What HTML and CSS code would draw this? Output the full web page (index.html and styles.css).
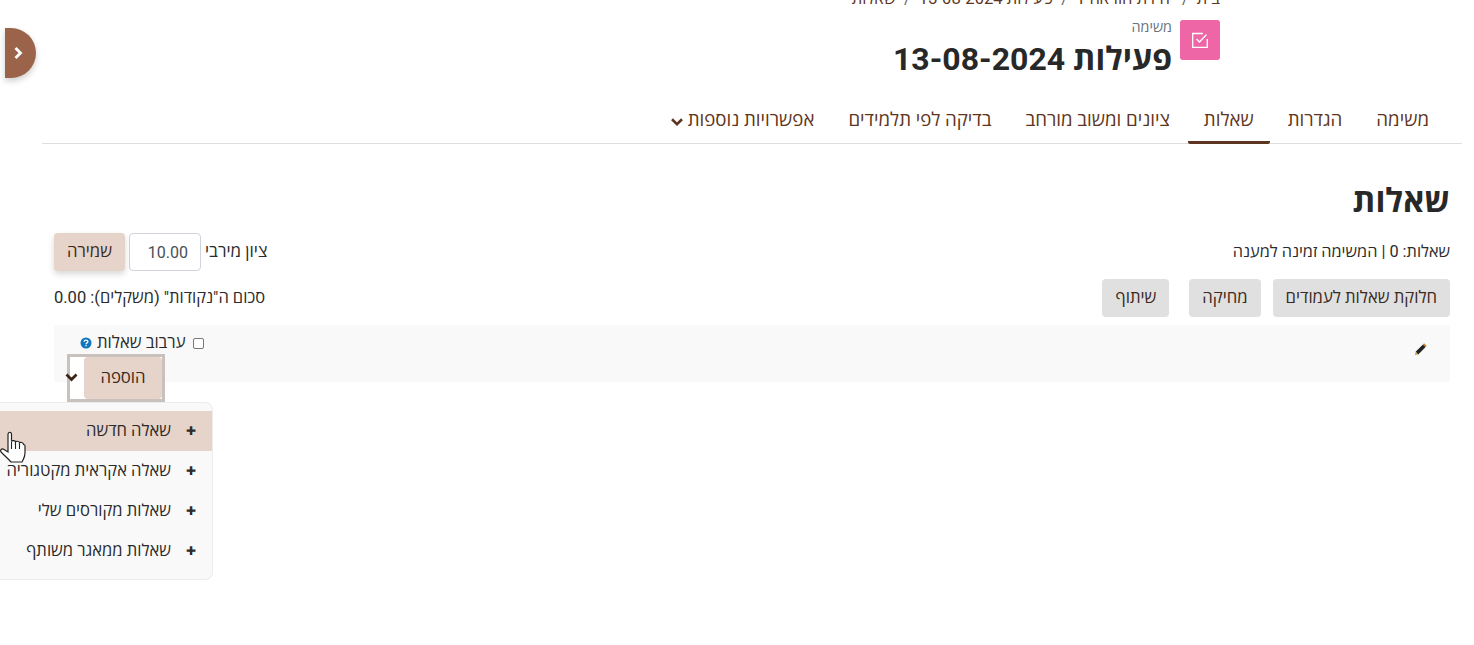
FILE: index.html
```html
<!DOCTYPE html>
<html lang="he" dir="rtl">
<head>
    <meta charset="UTF-8">
    <meta name="viewport" content="width=device-width, initial-scale=1.0">
    <title>פעילות 13-08-2024: שאלות</title>
    <link rel="stylesheet" href="styles.css">
</head>
<body>
    <a class="drawer-toggle" href="#">
        <svg width="10" height="14" viewBox="0 0 10 14"><path d="M2.5 2l5 5-5 5" fill="none" stroke="#fff" stroke-width="2.8"/></svg>
    </a>

    <div class="page">
        <ol class="breadcrumb">
            <li>בית</li>
            <li class="sep">/</li>
            <li>יחידת הוראה 1</li>
            <li class="sep">/</li>
            <li>פעילות 13-08-2024</li>
            <li class="sep">/</li>
            <li>שאלות</li>
        </ol>

        <div class="page-header">
            <div class="activity-icon">
                <svg width="16" height="16" viewBox="0 0 16 16" fill="none" stroke="#fff" stroke-width="1.3">
                    <path d="M11 1.5H.7v13.800h14.600V7"/>
                    <path d="M4.5 7l3 3L14.500 2.500"/>
                </svg>
            </div>
            <div class="header-text">
                <div class="activity-type">משימה</div>
                <h1>פעילות 13-08-2024</h1>
            </div>
        </div>

        <ul class="tabs">
            <li>משימה</li>
            <li>הגדרות</li>
            <li class="active">שאלות</li>
            <li>ציונים ומשוב מורחב</li>
            <li>בדיקה לפי תלמידים</li>
            <li>אפשרויות נוספות
                <svg width="12" height="8" viewBox="0 0 12 8"><path d="M1 1.300l5 4.900 5-4.900" fill="none" stroke="#5e3521" stroke-width="2.600"/></svg>
            </li>
        </ul>

        <div class="content">
            <h2>שאלות</h2>

            <div class="row info-row">
                <div>שאלות: 0 | המשימה זמינה למענה</div>
                <div class="maxgrade">
                    <label for="maxgrade">ציון מירבי</label>
                    <input type="text" id="maxgrade" value="10.00">
                    <button class="btn-primary" type="button">שמירה</button>
                </div>
            </div>

            <div class="row actions-row">
                <div class="actions">
                    <button class="btn-grey" type="button">חלוקת שאלות לעמודים</button>
                    <button class="btn-grey" type="button">מחיקה</button>
                    <button class="btn-grey btn-share" type="button">שיתוף</button>
                </div>
                <div class="sum">סכום ה"נקודות" (משקלים): 0.00</div>
            </div>

            <div class="section-bar">
                <svg class="pencil" width="13" height="13" viewBox="0 0 12 12">
                    <path d="M8.3 1.300l2.400 2.400-6.800 6.800-2.400-2.400z" fill="#222"/>
                    <path d="M8.3 1.300l1-1 2.400 2.400-1 1z" fill="#c77b20"/>
                    <path d="M1.500 8.100l2.400 2.400-3.200.8z" fill="#d9a441"/>
                </svg>
                <div class="section-tools">
                    <div class="shuffle">
                        <input type="checkbox" id="shuffle">
                        <label for="shuffle">ערבוב שאלות</label>
                        <svg width="12" height="12" viewBox="0 0 12 12">
                            <circle cx="6" cy="6" r="5.5" fill="#0f77bd"/>
                            <path d="M4.200 4.700c0-1 .8-1.600 1.800-1.600s1.900.6 1.900 1.500c0 1.300-1.800 1.300-1.800 2.600" fill="none" stroke="#fff" stroke-width="1.3"/>
                            <rect x="5.4" y="8" width="1.3" height="1.3" fill="#fff"/>
                        </svg>
                    </div>
                    <div class="add-menu">
                        <button class="btn-add" type="button">הוספה</button>
                        <svg width="13" height="9" viewBox="0 0 13 9"><path d="M1.500 1.500l5 5 5-5" fill="none" stroke="#3b2212" stroke-width="2.700"/></svg>
                    </div>
                </div>
            </div>
        </div>
    </div>

    <ul class="dropdown">
        <li class="hover"><span class="plus">✚</span>שאלה חדשה</li>
        <li><span class="plus">✚</span>שאלה אקראית מקטגוריה</li>
        <li><span class="plus">✚</span>שאלות מקורסים שלי</li>
        <li><span class="plus">✚</span>שאלות ממאגר משותף</li>
    </ul>

    <svg class="cursor" width="26" height="34" viewBox="0 0 26 34">
        <path d="M8 4.500c0-3 3.500-3 3.500 0v7c.7-1.400 4-1.200 4 .5.7-1.200 4-1 4 .8.8-1 4-.4 4 1.700 1 0 1.500.5 1.500 1.500v7c0 4-1.600 6-3 9H11C8.500 29 5 26 1.500 22.500c-2-2 0-4.500 2.500-3L8 22z" fill="#fff" stroke="#222" stroke-width="1.200"/>
        <path d="M11.500 12v7M15.500 12.500V19M19.500 13.500V19" fill="none" stroke="#222" stroke-width="1.100"/>
    </svg>
</body>
</html>
```

FILE: styles.css
```css
html, body {
    height: 100%;
    overflow: hidden;
}
body {
    margin: 0;
    background-color: white;
    font-family: Roboto, "Open Sans", sans-serif;
    font-size: 16.3px;
    line-height: 1.5;
    color: #2b2b2b;
}
ul, ol {
    list-style: none;
    margin: 0;
    padding: 0;
}
.page {
    margin: -13px 12px 0 42px;
}
.breadcrumb {
    display: flex;
    gap: 8px;
    height: 22px;
    padding-right: 242px;
    font-size: 16.6px;
    color: #5e3521;
}
.breadcrumb .sep {
    color: #6a6a6a;
}
.page-header {
    display: flex;
    gap: 8px;
    padding: 11px 242px 0 0;
    height: 69px;
}
.activity-icon {
    width: 40px;
    height: 40px;
    border-radius: 3px;
    background-color: #ee66a6;
    display: flex;
    justify-content: center;
    align-items: center;
}
.activity-type {
    font-size: 14.4px;
    line-height: 16px;
    color: #6a737b;
}
h1 {
    margin: 3px 0 0;
    font-size: 32px;
    line-height: 40px;
    font-weight: 700;
    color: #282828;
}
.tabs {
    display: flex;
    gap: 2px;
    margin-top: 9px;
    padding-right: 17px;
    height: 45px;
    border-bottom: 1px solid #dedede;
    font-size: 18.7px;
    color: #5e3521;
}
.tabs li {
    box-sizing: border-box;
    height: 46px;
    padding: 8px 16px 0;
    white-space: nowrap;
}
.tabs .active {
    border-bottom: 3px solid #5e3521;
    border-radius: 2px;
}
.content {
    padding: 0 12px;
}
h2 {
    margin: 36px 0 0;
    font-size: 32.7px;
    line-height: 42px;
    font-weight: 700;
    color: #282828;
}
.row {
    display: flex;
    justify-content: space-between;
    align-items: center;
}
.info-row {
    margin-top: 11px;
    align-items: flex-start;
}
.info-row > div:first-child {
    padding-top: 7px;
}
.maxgrade {
    display: flex;
    align-items: center;
    gap: 4px;
}
.maxgrade label {
    padding-bottom: 1px;
    font-size: 17px;
}
.maxgrade input {
    box-sizing: border-box;
    width: 72px;
    height: 38px;
    padding: 0 12px;
    border: 1px solid #ced4da;
    border-radius: 4px;
    font: inherit;
    font-size: 16px;
    color: #495057;
    direction: ltr;
    text-align: right;
}
button {
    font: inherit;
    font-size: 16.7px;
    border: none;
    border-radius: 4px;
    color: #3b2a20;
    padding: 0 12px;
    height: 38px;
}
.btn-primary {
    width: 71px;
    background-color: #e6d3c9;
    box-shadow: 0 3px 6px rgba(0, 0, 0, 0.16);
}
.actions-row {
    margin-top: 8px;
}
.actions {
    display: flex;
    gap: 12px;
}
.btn-grey {
    background-color: #e0e0e0;
    padding: 0 13px;
}
.btn-share {
    margin-right: 8px;
}
.sum {
    font-size: 16.5px;
}
.section-bar {
    display: flex;
    justify-content: space-between;
    margin-top: 8px;
    height: 57px;
    background-color: #f9f9f9;
}
.pencil {
    margin: 18px 23px 0 0;
}
.section-tools {
    display: flex;
    flex-direction: column;
    align-items: flex-end;
}
.shuffle {
    display: flex;
    align-items: center;
    gap: 5px;
    height: 22px;
    padding-top: 7px;
    margin-left: 26px;
    font-size: 16.7px;
}
.shuffle input {
    appearance: none;
    box-sizing: border-box;
    margin: 0 0 0 2px;
    width: 11px;
    height: 11px;
    border: 1px solid #777;
    border-radius: 2px;
    background-color: white;
}
.add-menu {
    display: flex;
    justify-content: space-between;
    align-items: center;
    width: 92px;
    height: 42px;
    margin-left: 13px;
    border: 3px solid #c9c1bc;
    background-color: white;
}
.add-menu svg {
    margin-left: -5px;
    margin-bottom: 2px;
}
.btn-add {
    flex: none;
    width: 78px;
    height: 42px;
    padding: 0;
    background-color: #e6d3c9;
}
.dropdown {
    position: absolute;
    top: 402px;
    left: 0;
    width: 213px;
    box-sizing: border-box;
    height: 178px;
    padding: 8px 0;
    background-color: #f9f9f9;
    border: 1px solid #ececec;
    border-left: none;
    border-radius: 0 8px 8px 0;
    font-size: 16.6px;
}
.dropdown li {
    height: 40px;
    line-height: 40px;
    display: flex;
    white-space: nowrap;
}
.dropdown .hover {
    background-color: #e6d3c9;
}
.plus {
    width: 17px;
    margin: 0 13px 0 11px;
    font-size: 12px;
    color: #2b2b2b;
    text-align: center;
}
.drawer-toggle {
    position: absolute;
    top: 28px;
    left: 5px;
    box-sizing: border-box;
    width: 31px;
    height: 50px;
    padding-right: 6px;
    border-radius: 0 25px 25px 0;
    background-color: #9b6349;
    box-shadow: 0 3px 6px rgba(0, 0, 0, 0.2);
    display: flex;
    justify-content: center;
    align-items: center;
}
.cursor {
    position: absolute;
    top: 430px;
    left: 0;
}
```
